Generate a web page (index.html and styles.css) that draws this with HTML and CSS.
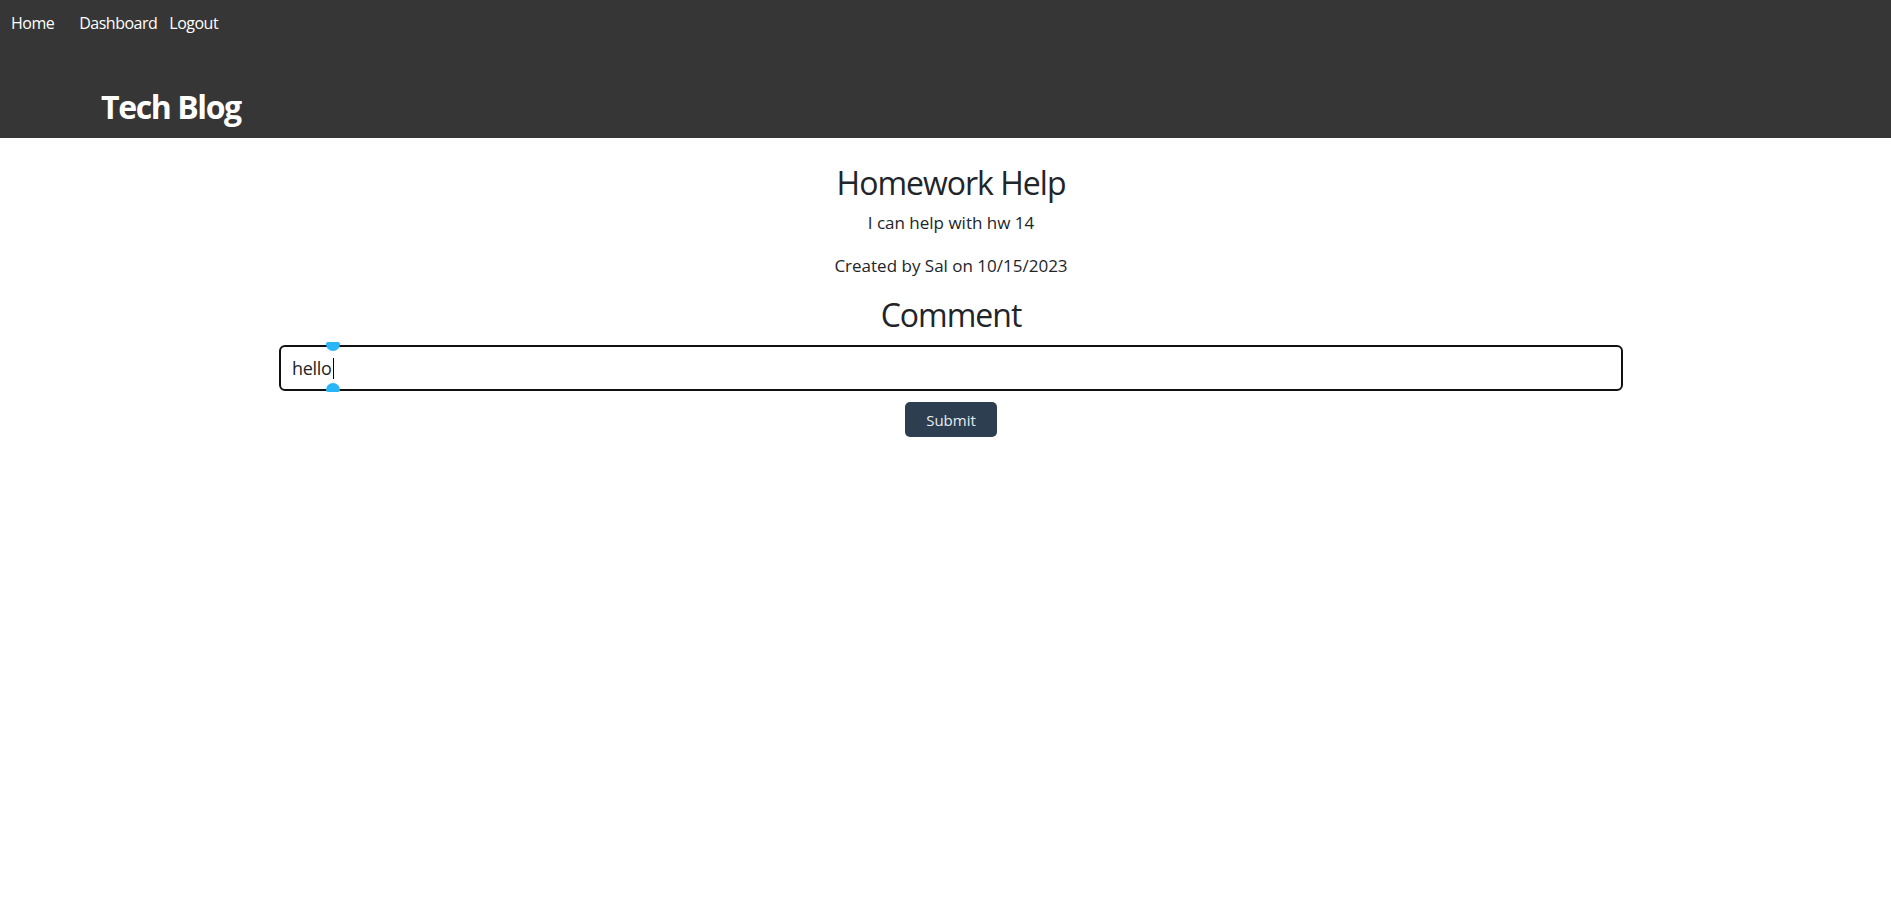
FILE: index.html
```html
<!DOCTYPE html>
<html lang="en">
<head>
<meta charset="utf-8">
<title>Tech Blog</title>
<link rel="stylesheet" href="styles.css">
</head>
<body>
<header class="site-header">
  <nav class="nav">
    <a class="nav-link nav-home" href="#">Home</a>
    <a class="nav-link nav-dash" href="#">Dashboard</a>
    <a class="nav-link" href="#">Logout</a>
  </nav>
  <h1 class="brand">Tech Blog</h1>
</header>
<main class="post">
  <h2 class="post-title">Homework Help</h2>
  <p class="post-body">I can help with hw 14</p>
  <p class="post-meta">Created by Sal on 10/15/2023</p>
  <h2 class="comment-title">Comment</h2>
  <form class="comment-form">
    <div class="field">
      <input class="comment-input" type="text" value="hello">
      <span class="caret"></span>
      <span class="handle handle-top"></span>
      <span class="handle handle-bottom"></span>
    </div>
    <button class="submit-btn" type="button">Submit</button>
  </form>
</main>
</body>
</html>
```

FILE: styles.css
```css
* { box-sizing: border-box; }
html, body { margin: 0; padding: 0; background: #fff; }
body {
  font-family: "Open Sans", "Noto Sans", sans-serif;
  color: #212529;
}
.site-header {
  background: #363636;
  height: 138px;
  display: flex;
  flex-direction: column;
}
.nav {
  display: flex;
  padding: 13px 0 0 11px;
  line-height: 20px;
  font-size: 16px;
}
.nav-link { color: #fff; text-decoration: none; letter-spacing: -0.5px; }
.nav-home { margin-right: 25px; }
.nav-dash { margin-right: 12px; }
.brand {
  margin: 55px 0 0 101px;
  font-size: 32px;
  line-height: 38px;
  font-weight: 700;
  color: #fff;
  letter-spacing: -1.4px;
}
.post {
  display: flex;
  flex-direction: column;
  align-items: center;
  padding-left: 11px;
}
.post-title, .comment-title {
  font-size: 32px;
  line-height: 38px;
  font-weight: 400;
  margin: 0;
  letter-spacing: -1px;
}
.post-title { margin-top: 26px; }
.post-body, .post-meta {
  font-size: 17px;
  line-height: 20px;
  margin: 0;
}
.post-body { margin-top: 11px; }
.post-meta { margin-top: 23px; }
.comment-title { margin-top: 20px; }
.comment-form {
  display: flex;
  flex-direction: column;
  align-items: center;
  margin-top: 11px;
}
.field { position: relative; }
.comment-input {
  display: block;
  width: 1344px;
  height: 46px;
  border: 2px solid #111;
  border-radius: 6px;
  padding: 0 11px;
  font-family: inherit;
  font-size: 18px;
  color: #212529;
  outline: none;
  letter-spacing: -0.3px;
}
.caret {
  position: absolute;
  left: 54px;
  top: 13px;
  width: 1px;
  height: 21px;
  background: #000;
}
.handle {
  position: absolute;
  left: 47px;
  width: 14px;
  height: 9px;
  background: #29b6f6;
}
.handle-top {
  top: -3px;
  border-radius: 2px 2px 7px 7px;
}
.handle-bottom {
  top: 38px;
  border-radius: 7px 7px 2px 2px;
}
.submit-btn {
  margin-top: 11px;
  width: 92px;
  height: 35px;
  border: none;
  border-radius: 5px;
  background: #2c3e50;
  color: #e6ecef;
  font-family: inherit;
  font-size: 15px;
}
```
